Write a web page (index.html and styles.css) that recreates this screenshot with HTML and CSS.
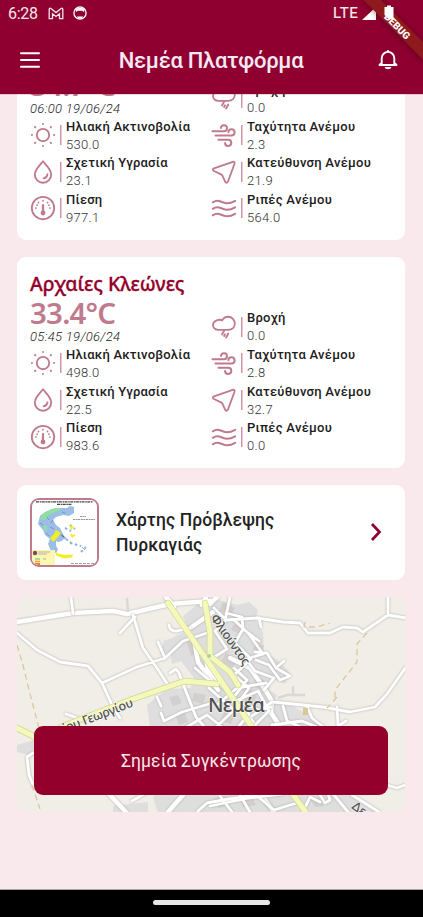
FILE: index.html
```
<!DOCTYPE html>
<html lang="el">
<head>
<meta charset="utf-8">
<meta name="viewport" content="width=device-width, initial-scale=1">
<title>Νεμέα Πλατφόρμα</title>
<link rel="stylesheet" href="styles.css">
</head>
<body>
<svg class="defs" aria-hidden="true">
  <symbol id="i-sun" viewBox="0 0 26 26"><circle cx="13" cy="13" r="6.200"/><path d="M13 1.900v.1M13 24v.1M1.900 13h.1M24 13h.1M5 5l.3.300M20.700 20.700l.3.300M5 21l.3-.300M20.700 5.300l.3-.300" stroke-width="1.900"/></symbol>
  <symbol id="i-drop" viewBox="0 0 26 26"><path d="M13 2.200C10 6 4.800 10.500 4.800 15.500a8.200 8.200 0 0 0 16.400 0C21.200 10.500 16 6 13 2.200z"/><path d="M17.500 15.300a4.800 4.800 0 0 1-3.900 4"/></symbol>
  <symbol id="i-gauge" viewBox="0 0 26 26"><circle cx="13" cy="13" r="11.200"/><path d="M13 10v7" stroke-width="2.200"/><circle cx="13" cy="18" r="1.500" fill="currentColor"/><path d="M13 5.600v.2M8.500 7.400v.2M17.500 7.400v.2M5.900 13h.2M19.900 13h.2M7.100 10.100v.1M18.900 10.100v.1" stroke-width="1.700"/></symbol>
  <symbol id="i-rain" viewBox="0 0 26 26"><path d="M7.500 15.800h9.700c4 0 6.600-2.700 6.600-6.200S21 2.700 17.300 2.700c-3 0-5 1.400-6.100 3.700C9.600 5.700 8 5.500 6.400 6.100 3.700 7 2 8.800 2 11.100c0 2.800 2.300 4.700 5.500 4.700zM13.200 16.500l-2.200 4M17.300 19.500l-2.200 4M14 20.300l-.9 1.700"/></symbol>
  <symbol id="i-wind" viewBox="0 0 26 26"><path d="M1.500 9.200h11.500a3 3 0 1 0-3-3.300M4.500 13.500h16a3.100 3.100 0 1 0-3.100-3.300M7.500 17.800h9.700a3.100 3.100 0 1 1-3.100 3.300" stroke-width="2"/></symbol>
  <symbol id="i-nav" viewBox="0 0 26 26"><path d="M3 9.400 21.700 2.800c1.400-.5 2.300.5 1.800 1.900L17 22.500c-.6 1.600-2.300 1.600-2.900.1l-2.300-5.200c-.4-1-.8-1.500-1.800-2L3 12c-1.500-.7-1.500-2.100 0-2.600z"/></symbol>
  <symbol id="i-waves" viewBox="0 0 26 26"><path d="M1.800 7.300c3-1.900 5-1.900 7.800-.8 3.800 1.600 7.500 3.200 14.600-.7M1.800 13.800c3-1.900 5-1.900 7.800-.8 3.800 1.600 7.500 3.200 14.600-.7M1.800 20.300c3-1.900 5-1.900 7.800-.8 3.800 1.600 7.500 3.200 14.600-.7" stroke-width="2"/></symbol>
</svg>

<div class="screen">
  <header class="top">
    <div class="status">
      <span class="clock">6:28</span>
      <svg class="gmail" viewBox="0 0 16 13"><path d="M1.200 11.700V2.200c0-1 1-1.300 1.700-.7L8 5.600l5.100-4.100c.7-.6 1.700-.3 1.700.7v9.500h-3.300V6.800L8 9.500 4.500 6.800v4.900z" fill="none" stroke="#f5e6ea" stroke-width="1.300"/></svg>
      <svg class="cat" viewBox="0 0 14 14"><circle cx="7" cy="7" r="6.100" fill="none" stroke="#fff" stroke-width="1.300"/><path d="M2.500 3.500Q7-.5 11.500 3.500L11 6l-2-1.200H5L3 6zM4 9.800l1 .8h4l1-.8-1 2.700H5z" fill="#fff"/></svg>
      <span class="lte">LTE</span>
      <svg class="signal" viewBox="0 0 14 13"><path d="M14 0v13H0z" fill="#fff"/></svg>
    </div>
    <div class="bar">
      <svg class="menu" viewBox="0 0 20 16"><path d="M1 1.200h18M1 8h18M1 14.800h18" stroke="#fff" stroke-width="2" stroke-linecap="round"/></svg>
      <h1>Νεμέα Πλατφόρμα</h1>
      <svg class="bell" viewBox="0 0 20 20"><path d="M1.500 15h17M3.700 14V8.200a6.300 6.300 0 0 1 12.600 0V14M1.500 15l2.200-2.300M18.500 15l-2.200-2.300" fill="none" stroke="#fff" stroke-width="1.900" stroke-linecap="round"/><path d="M6.500 17h7a3.600 3 0 0 1-7 0z" fill="#fff"/><path d="M10 .3V2" stroke="#fff" stroke-width="2"/></svg>
    </div>
  </header>
  <svg class="ribbon" viewBox="0 0 64 64">
    <defs><filter id="sh" x="-20%" y="-20%" width="140%" height="140%"><feGaussianBlur stdDeviation="2.500"/></filter></defs>
    <path d="M2 0h22l40 40v24z" fill="#300" opacity=".3" filter="url(#sh)"/>
    <path d="M4.500 0H22l42 42v17.500z" fill="#8e1a20"/>
    <text class="debug" transform="translate(38.300 26.300) rotate(45)" x="0" y="3.600" text-anchor="middle">DEBUG</text>
    <path d="M25.500 7h2.500V5.500h4V7h2.500v12h-5l-4-4z" fill="#fff"/>
  </svg>

  <main class="feed">
    <section class="card station">
      <div class="col">
        <div class="temp">34.7°C</div>
        <div class="date">06:00 19/06/24</div>
        <div class="row"><svg class="ic"><use href="#i-sun"/></svg><div class="info"><b>Ηλιακή Ακτινοβολία</b><span>530.0</span></div></div>
        <div class="row"><svg class="ic"><use href="#i-drop"/></svg><div class="info"><b>Σχετική Υγρασία</b><span>23.1</span></div></div>
        <div class="row"><svg class="ic"><use href="#i-gauge"/></svg><div class="info"><b>Πίεση</b><span>977.1</span></div></div>
      </div>
      <div class="col right">
        <div class="row"><svg class="ic"><use href="#i-rain"/></svg><div class="info"><b>Βροχή</b><span>0.0</span></div></div>
        <div class="row"><svg class="ic"><use href="#i-wind"/></svg><div class="info"><b>Ταχύτητα Ανέμου</b><span>2.3</span></div></div>
        <div class="row"><svg class="ic"><use href="#i-nav"/></svg><div class="info"><b>Κατεύθυνση Ανέμου</b><span>21.9</span></div></div>
        <div class="row"><svg class="ic"><use href="#i-waves"/></svg><div class="info"><b>Ριπές Ανέμου</b><span>564.0</span></div></div>
      </div>
    </section>

    <section class="card station">
      <div class="col">
        <div class="name">Αρχαίες Κλεώνες</div>
        <div class="temp">33.4°C</div>
        <div class="date">05:45 19/06/24</div>
        <div class="row"><svg class="ic"><use href="#i-sun"/></svg><div class="info"><b>Ηλιακή Ακτινοβολία</b><span>498.0</span></div></div>
        <div class="row"><svg class="ic"><use href="#i-drop"/></svg><div class="info"><b>Σχετική Υγρασία</b><span>22.5</span></div></div>
        <div class="row"><svg class="ic"><use href="#i-gauge"/></svg><div class="info"><b>Πίεση</b><span>983.6</span></div></div>
      </div>
      <div class="col right">
        <div class="row"><svg class="ic"><use href="#i-rain"/></svg><div class="info"><b>Βροχή</b><span>0.0</span></div></div>
        <div class="row"><svg class="ic"><use href="#i-wind"/></svg><div class="info"><b>Ταχύτητα Ανέμου</b><span>2.8</span></div></div>
        <div class="row"><svg class="ic"><use href="#i-nav"/></svg><div class="info"><b>Κατεύθυνση Ανέμου</b><span>32.7</span></div></div>
        <div class="row"><svg class="ic"><use href="#i-waves"/></svg><div class="info"><b>Ριπές Ανέμου</b><span>0.0</span></div></div>
      </div>
    </section>

    <section class="card fire">
      <svg class="thumb" viewBox="0 0 65 65">
        <rect width="65" height="65" fill="#fff"/>
        <path d="M4 1.800h57M25 4.300h15" stroke="#444" stroke-width="1.200" stroke-dasharray="3 .7 1.500 .5"/>
        <path d="M41 19.500h22M48 16.500h6" stroke="#888" stroke-width=".9" stroke-dasharray="2 .6"/>
        <path d="M6 24l2-8 5-4 7-3 8-1 7 0 3-2 4 1 0 6-5 3-6-1-7 2-3 3 3 5 4 3 3 6 2 3-3 4-4 1-2-1 0 5 2 3-2 5-2-4-3 1-3-7 2-5-5-4-2-5z" fill="#9bbde6"/>
        <path d="M24 31l5 3 6 6M34 39l8 6M38 43l11 3M49 52l5-5M33 28l6 3M38 25l5 4" stroke="#8fb3df" stroke-width="2" stroke-dasharray="2.500 2.500"/>
        <path d="M8 19l4-6 7-3 4-2 6 0-1 2-5 2-6 3-4 5zM12 24l3 3-1 5-2-3z" fill="#8fe29b"/>
        <path d="M18 38l4-4 2-4 5 3-3 4-5 5zM37 25l5 2-3 3zM38 34l6 1-4 3zM24 53l9 2 8-.5-1 3-8 1-8-3z" fill="#f2ee22"/>
        <path d="M8 23l3 2M15 17l2 3M21 20l-2 3M18 27l4 2M30 12l3 1M14 33l3 3M50 47l3 3" stroke="#5e88bb" stroke-width=".7"/>
        <path d="M0 50h23v15H0z" fill="#fbf6b3"/><circle cx="3" cy="53" r="2.200" fill="#7d4a62"/>
        <path d="M6 52h12M6 54h9M11 59h3" stroke="#999" stroke-width=".7"/>
        <path d="M3 59h5" stroke="#86d79a" stroke-width="1.500"/><path d="M3 61.500h5" stroke="#f0a03c" stroke-width="1.500"/><path d="M3 64h5" stroke="#e04b36" stroke-width="1.500"/><path d="M39 63.500h23" stroke="#888" stroke-width=".8" stroke-dasharray="3 1"/>
      </svg>
      <div class="fire-title">Χάρτης Πρόβλεψης Πυρκαγιάς</div>
      <svg class="chev" viewBox="0 0 12 20"><path d="M2 2 9.500 10 2 18" fill="none" stroke="#93002b" stroke-width="2.700"/></svg>
    </section>

    <section class="map">
      <svg class="tiles" viewBox="17 597 388 215" preserveAspectRatio="none">
        <rect x="17" y="597" width="388" height="215" fill="#f1eee8"/>
        <g class="town">
          <path d="M183 616l20-16h16l18 5 12-3 9 8-3 10 8 12 1 20 14 8 13 14-6 10-13-5-3 11 8 5-4 8 20 3 20 12 14 10 7 15 28 75H160l-7-20 25-60 4-20-24-12 5-15 26 1 5-14-20-26-14 3 4-15 16-2 8-7z"/>
          <path d="M168 640l16-8 6 26-18 6zM147 705l20-16 25-1 15 40h-57zM17 745l20-6v18l-20-5zM113 806l35-4v10h-35z"/>
          <path d="M293 795l60 0 24 17h-75z"/>
        </g>
        <g class="blocks">
          <path d="M223 602l12 6-4 8-12-5zM235 622l9 3-4 9-9-4zM186 640l10-3 5 14-10 5zM226 653l12 8-7 7-10-6zM241 684l8-3 4 11-8 4zM258 677l7 4-5 8-7-3zM194 693l12 2-3 9-11-3zM169 697l9-2 4 8-9 3zM176 716l9-3 3 9-9 3zM224 712l10 4-3 8-10-3zM250 690l7 7-6 7-7-4zM256 642l8 4-4 8-7-5zM215 798l12-2 3 9-12 3zM240 797l12-1 4 9-13 2zM310 799l9-1 5 8-9 1z"/>
        </g>
        <g class="road wide">
          <path d="M17 622 73 613l40-2 14 3 43-10 40-3M190 628l23-16M194 640l4 22 20 28M205 655l3 15 14 15 16 17 18 25M230 658l20 10 14 20 8 13-1 12 9 13M166 597l8 10M206 597l-4 8M217 597l-7 7M108 793l18 19M260 793l14 19M183 795l-15 17"/>
        </g>
        <g class="road">
          <path d="M17 633l20 17 23 12 28 4 14 17 11 24 7 11M71 597l2 16M102 683l35-16 28-9 18-17 27-9M165 658l-7-16M133 615l10 33 14 20 11 17M135 617l-15 16M169 625q1 7 8 6l13-3M257 618l26 4 17 1 8 10h22l13-6 14 1 6 4 25-17 18 3M388 597v18M406 667l-19 27-12 13-25 5-27-5-50-5"/>
          <path d="M170 673l6-4 3 4 6 16 11 28 12 14M195 668l14 12M157 697l4 9M161 713l3 8 18-9 27-8M66 714l17 6M185 728l22-13 20 16M214 608l12 12 31-2M230 597l-5 24-10 10 12 18-19 12M226 613l16 4 1 12-8 14 16 16-17 16 15 13-10 14 20 8 12-3M234 620l15 14 14 20-17 5 9 12 19 7-10 12M243 629l16 12M259 618l2 9M255 652l12 1 9 15 14 8-10 4-11-15-13-5M276 668l8-7M234 668l13 12-14 18 16 16-14 17M218 704l19-16 29-5M209 688l25 22-22 21M238 700l20-9 11 20-20 20M272 702l-20 14M283 706l4 15 18 8M307 706l5 12 15 12M337 707l1 19 8-5M272 725l30-4 20 8"/>
          <path d="M33 753l-6 4 2 18 5 12M132 801l14-8M198 811l9-8 22-4 27-4M210 806l39-8 33-4M220 796l12 16M240 795l10 17M256 795l18 15 26-8M303 812l7-15 10 5M320 795l5 8 5-3-2-6M334 795l14 17M352 795l27 17M387 785l10 3 8-3"/>
        </g>
        <path class="minor" d="M278 698l9-3h18M293 694v-8M127 598l1 14"/>
        <g class="ycase"><path d="M168 603l47 69 37 55M292 793l15 21M205 603l5 30 0 23 20 16 8 13M17 728l20 10M61 727l72-28 52-18 32 3"/></g>
        <g class="yellow"><path d="M168 603l47 69 37 55M292 793l15 21M205 603l5 30 0 23 20 16 8 13M17 728l20 10M61 727l72-28 52-18 32 3"/></g>
        <path class="track" d="M17 645l6 20 7 29 9 34M32 785l8 24M305 622l-1 5h13l13-4M367 633l-10 11v18l-22 28 0 10M337 697l-10 11"/>
        <path d="M303 708h5v7h-5z" fill="#d6c995"/><circle cx="209" cy="656" r="2" fill="#a5d0a8"/>
        <text class="lbl road-lbl" transform="translate(64 733) rotate(-21)" textLength="75">ίου Γεωργίου</text>
        <text class="lbl road-lbl" transform="translate(210 618) rotate(55)" textLength="59">Φλιούντος</text>
        <text class="lbl town-lbl" x="208" y="711.500" textLength="57">Νεμέα</text>
        <text class="lbl road-lbl" transform="translate(351 808) rotate(35)">Δερ</text>
      </svg>
      <a class="cta">Σημεία Συγκέντρωσης</a>
    </section>
  </main>
  <footer class="navbar"><span class="pill"></span></footer>
</div>
</body>
</html>
```
FILE: styles.css
```
* { box-sizing: border-box; }
body { margin: 0; font-family: Roboto, "Noto Sans", sans-serif; background: #fae9ec; }
.defs { display: block; width: 0; height: 0; }
.screen { position: relative; width: 423px; height: 917px; display: flex; flex-direction: column; overflow: hidden; background: #fae9ec; }

.top { flex: none; height: 94px; background: #8f0030; color: #fff; z-index: 1; box-shadow: 0 0 1px #8f0030; }
.status { height: 26px; display: flex; align-items: center; padding-left: 8px; }
.clock { width: 40px; font-size: 16px; letter-spacing: -.3px; color: #f7e8ec; }
.gmail { width: 16px; height: 13px; }
.cat { width: 14px; height: 14px; margin-left: 9px; }
.lte { margin-left: 246px; font-size: 15px; letter-spacing: .6px; line-height: 18px; padding-bottom: 1px; color: #f7e8ec; -webkit-text-stroke: .2px #f7e8ec; }
.signal { width: 14px; height: 13px; margin-left: 4px; }
.bar { height: 68px; display: flex; align-items: center; justify-content: space-between; padding: 0 25px 0 20px; }
.menu { width: 20px; height: 16px; }
.bar h1 { margin: 0 0 0 4px; padding-top: 2px; font-size: 22px; line-height: 30px; font-weight: 500; letter-spacing: -.28px; color: #f5e9f4; white-space: nowrap; }
.bell { width: 20px; height: 20px; }
.ribbon { position: absolute; right: 0; top: 0; width: 64px; height: 64px; z-index: 2; }
.debug { font: 900 10px Roboto, sans-serif; fill: #fff; }

.feed { flex: 1; min-height: 0; display: flex; flex-direction: column; gap: 17.300px; padding: 0 18px 0 17px; margin-top: -65.500px; }
.card { flex: none; background: #fff; border-radius: 9px; }
.station { height: 211px; padding: 13px; display: flex; }
.col { width: 181.500px; display: flex; flex-direction: column; justify-content: flex-end; }
.name { height: 27px; font: 500 19.500px/27px "Noto Sans", sans-serif; color: #93002b; white-space: nowrap; letter-spacing: -.02px; -webkit-text-stroke: .3px #93002b; }
.temp { height: 31px; font: 600 29.500px/31px "Noto Sans", sans-serif; color: #bf7b8d; letter-spacing: -.8px; }
.date { height: 17px; font-size: 13px; line-height: 18px; font-style: italic; font-weight: 300; letter-spacing: .32px; color: #222; }
.row { height: 36.600px; display: flex; align-items: center; }
.ic { width: 26px; height: 26px; flex: none; fill: none; stroke: #bf7b8d; color: #bf7b8d; stroke-width: 1.850; stroke-linecap: round; stroke-linejoin: round; }
.info { margin-left: 4px; padding-left: 6px; display: flex; flex-direction: column; white-space: nowrap; background: linear-gradient(#cf95a4, #cf95a4) 0 center / 1.500px 20px no-repeat; }
.info b { padding-top: 1px; font-size: 13px; line-height: 18px; font-weight: 500; letter-spacing: .2px; color: #1c1c20; }
.right .info b { letter-spacing: .27px; }
.info span { font-size: 13px; line-height: 17.600px; letter-spacing: .3px; font-weight: 300; color: #333; }

.fire { height: 94.500px; padding: 13px; display: flex; align-items: center; }
.thumb { width: 69px; height: 69px; border: 2px solid #bf7b8d; border-radius: 9px; }
.fire-title { width: 200px; margin-left: 17px; padding-top: 1.500px; font-size: 17.500px; line-height: 25px; font-weight: 500; letter-spacing: .1px; color: #222; }
.chev { width: 12px; height: 20px; margin: 0 10px 0 auto; }

.map { flex: none; height: 215px; border-radius: 9px; overflow: hidden; display: grid; }
.tiles, .cta { grid-area: 1 / 1; }
.tiles { width: 388px; height: 215px; }
.cta { z-index: 1; align-self: end; margin: 0 17px 17px; height: 69px; padding-top: 1px; border-radius: 9px; background: #93002b; color: #f8e8ec; display: flex; align-items: center; justify-content: center; font-size: 17.500px; letter-spacing: .11px; }
.town { fill: #dedede; }
.blocks { fill: #cfc9c6; opacity: .7; }
.tiles g { stroke-linejoin: round; stroke-linecap: round; }
.road { fill: none; stroke: #fff; stroke-width: 2.800; filter: drop-shadow(0 0 .8px #aaa); }
.wide { stroke-width: 4.500; }
.minor { fill: none; stroke: #dad8d5; stroke-width: 2.500; }
.ycase { fill: none; stroke: #d2d69a; stroke-width: 6.500; }
.yellow { fill: none; stroke: #f4f8b8; stroke-width: 5; }
.track { fill: none; stroke: #dcc79c; stroke-width: 1.300; stroke-dasharray: 6 4; }
.lbl { font-family: "Noto Sans", sans-serif; fill: #505050; paint-order: stroke; stroke: #fff; stroke-opacity: .6; stroke-width: 1.500px; }
.road-lbl { font-size: 12.500px; font-weight: 500; }
.town-lbl { font-size: 20px; font-weight: 500; }

.navbar { position: absolute; left: 0; right: 0; bottom: 0; height: 28px; display: flex; justify-content: center; padding-top: 10px; background: #000; border-top: 1px solid #aaa; }
.pill { width: 117px; height: 4.500px; border-radius: 3px; background: #e8e8e8; }
```
